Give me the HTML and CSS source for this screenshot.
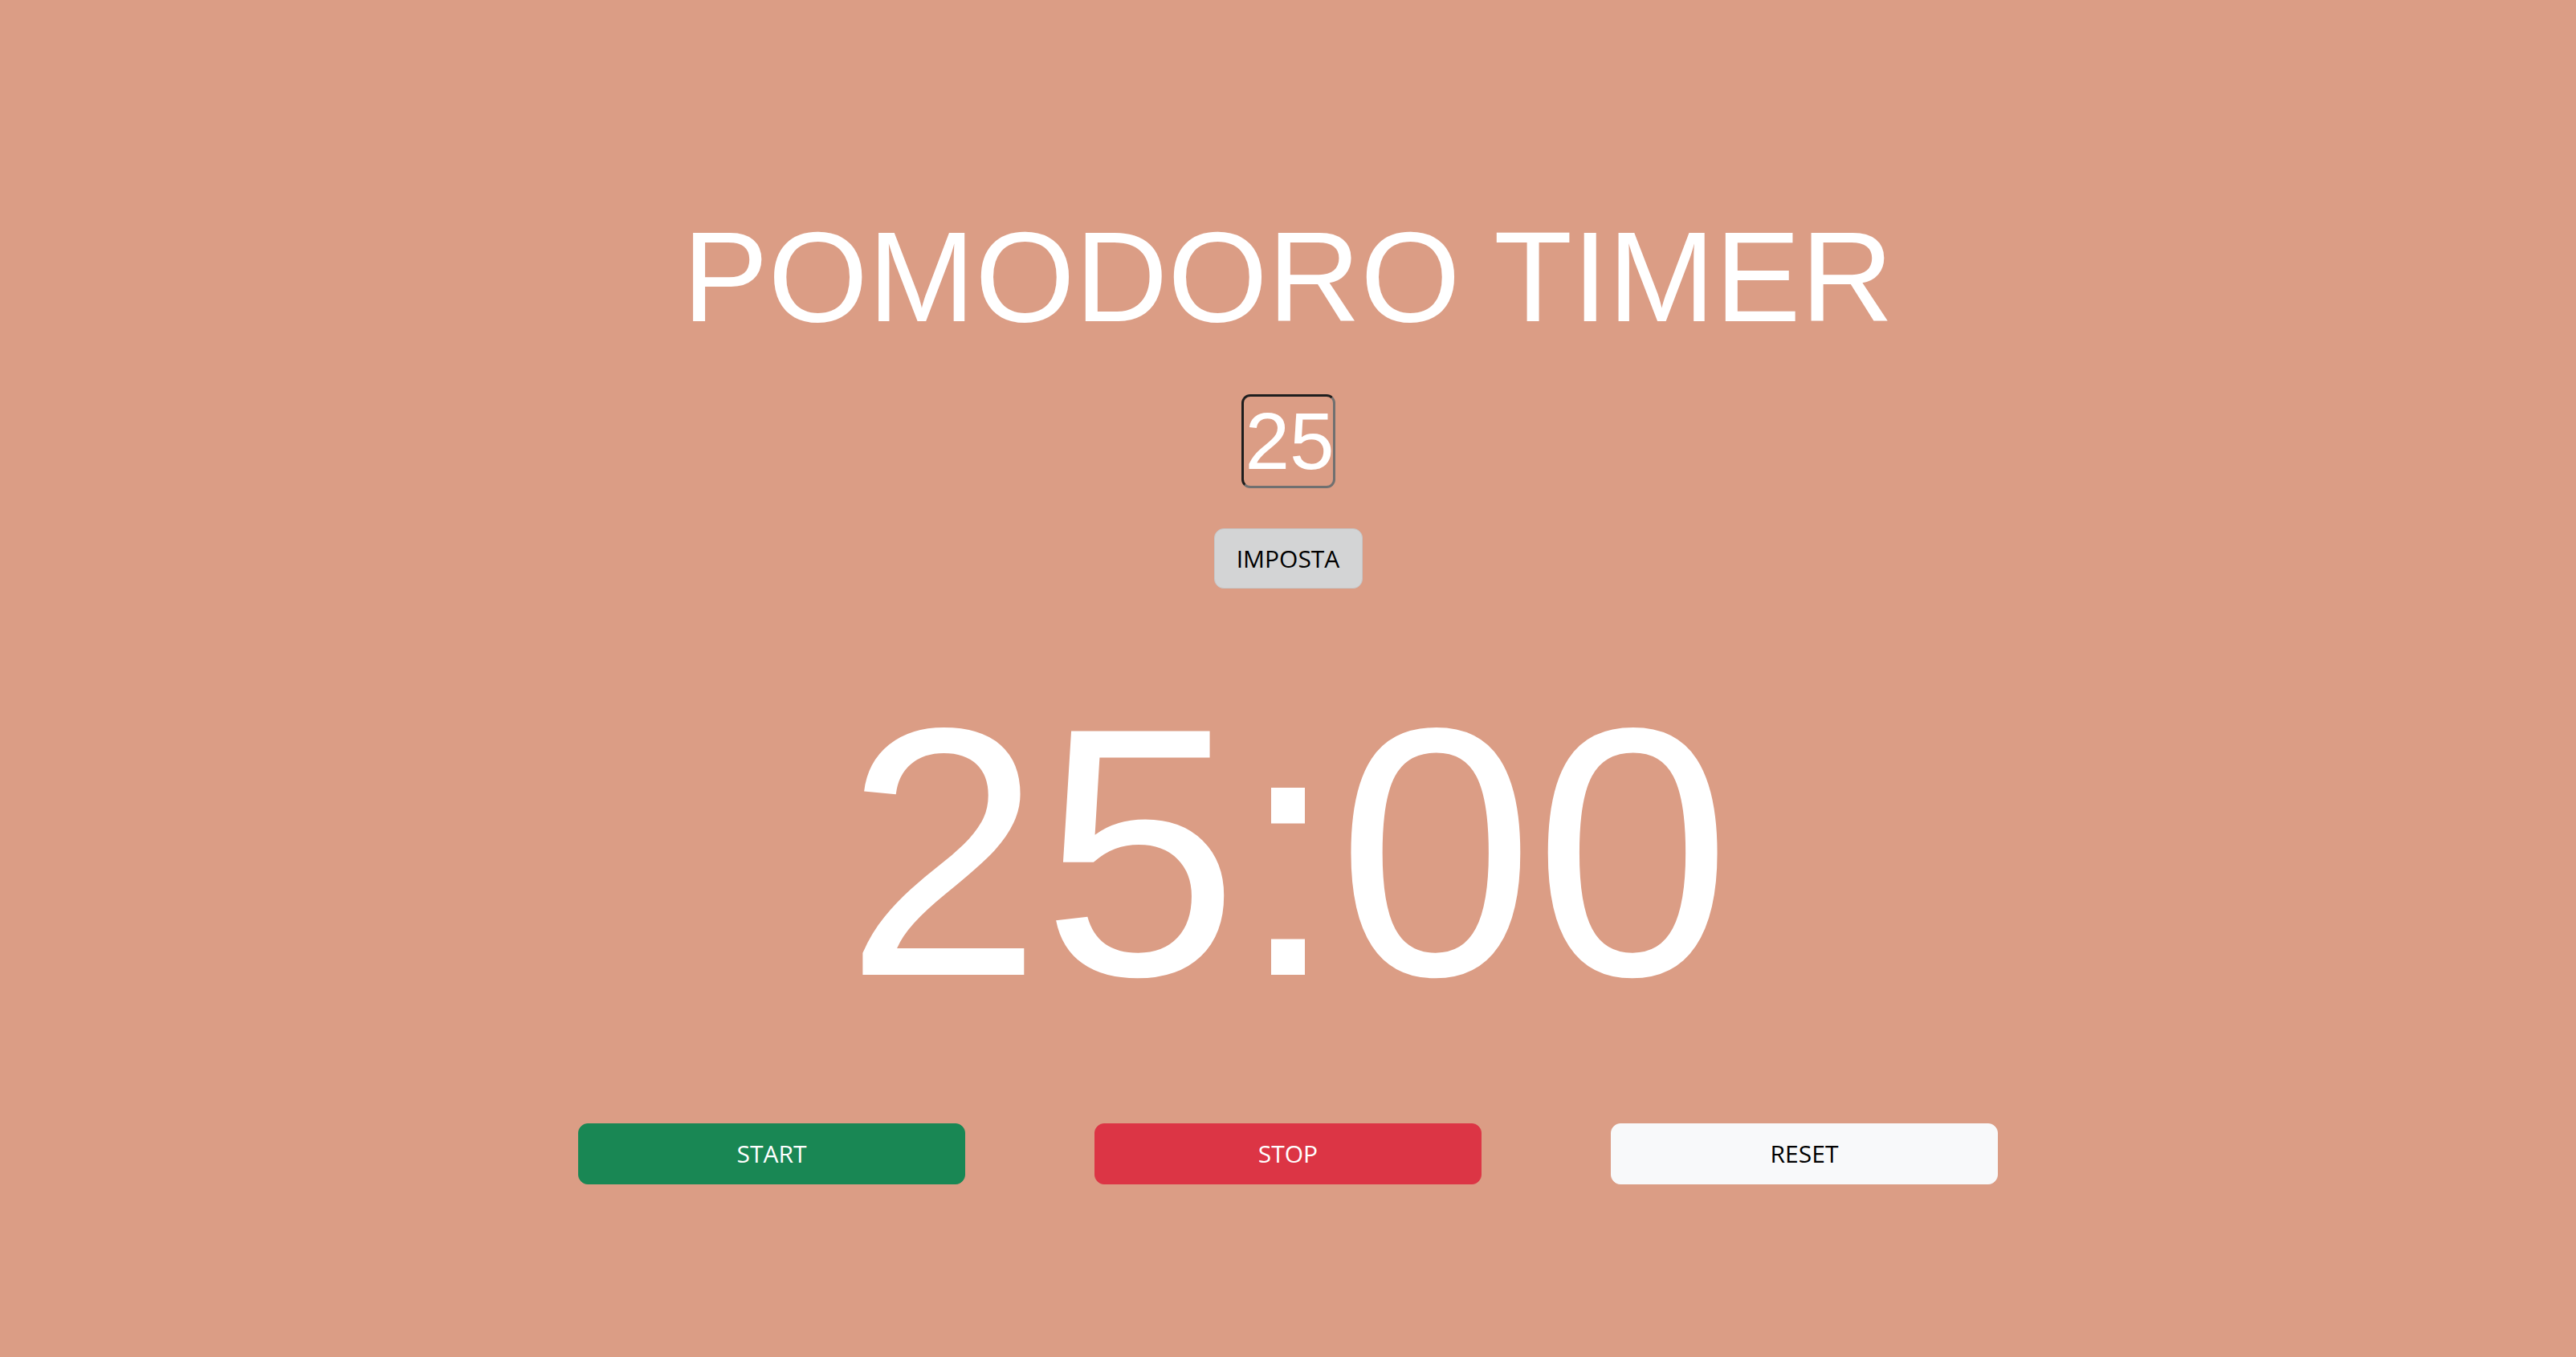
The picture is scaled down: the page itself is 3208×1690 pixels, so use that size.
FILE: index.html
```html
<!DOCTYPE html>
<html lang="it">
<head>
<meta charset="utf-8">
<title>Pomodoro Timer</title>
<link rel="stylesheet" href="styles.css">
</head>
<body>
<main class="app">
  <h1 class="title">POMODORO TIMER</h1>
  <input class="minutes" type="text" value="25">
  <button class="btn btn-set">IMPOSTA</button>
  <div class="clock">25:00</div>
  <div class="controls">
    <button class="btn btn-start">START</button>
    <button class="btn btn-stop">STOP</button>
    <button class="btn btn-reset">RESET</button>
  </div>
</main>
</body>
</html>
```
FILE: styles.css
```css
html, body {
  margin: 0;
  padding: 0;
}
body {
  background: #db9d85;
  font-family: "Liberation Sans", Arial, sans-serif;
  color: #fff;
  min-height: 1690px;
}
.app {
  display: flex;
  flex-direction: column;
  align-items: center;
  padding-top: 249px;
}
.title {
  margin: 0;
  font-size: 160px;
  font-weight: normal;
  line-height: 1.2;
  color: #fff;
}
.minutes {
  margin-top: 50px;
  box-sizing: border-box;
  width: 117px;
  height: 117px;
  padding: 1px 2px;
  font-family: "Liberation Sans", Arial, sans-serif;
  font-size: 100px;
  color: #fff;
  background: transparent;
  border-width: 3px;
  border-style: solid;
  border-color: #1e1e1e #707070 #707070 #1e1e1e;
  border-radius: 11px;
  outline: none;
}
.btn {
  box-sizing: border-box;
  font-family: "Open Sans", "Noto Sans", sans-serif;
  font-size: 30px;
  line-height: 48px;
  padding: 12px 24px;
  border: 1px solid transparent;
  border-radius: 12px;
  cursor: pointer;
}
.btn-set {
  margin-top: 50px;
  height: 75px;
  width: 185px;
  padding: 0;
  background: #d3d4d5;
  border-color: #c6c7c8;
  color: #000;
}
.clock {
  margin-top: 108px;
  font-size: 441px;
  line-height: 440px;
  color: #fff;
}
.controls {
  margin-top: 118px;
  display: flex;
  gap: 161px;
}
.controls .btn {
  width: 482px;
  height: 76px;
  padding: 0;
}
.btn-start {
  background: #198754;
  border-color: #198754;
  color: #fff;
}
.btn-stop {
  background: #dc3545;
  border-color: #dc3545;
  color: #fff;
}
.btn-reset {
  background: #f8f9fa;
  border-color: #f8f9fa;
  color: #000;
}
```
